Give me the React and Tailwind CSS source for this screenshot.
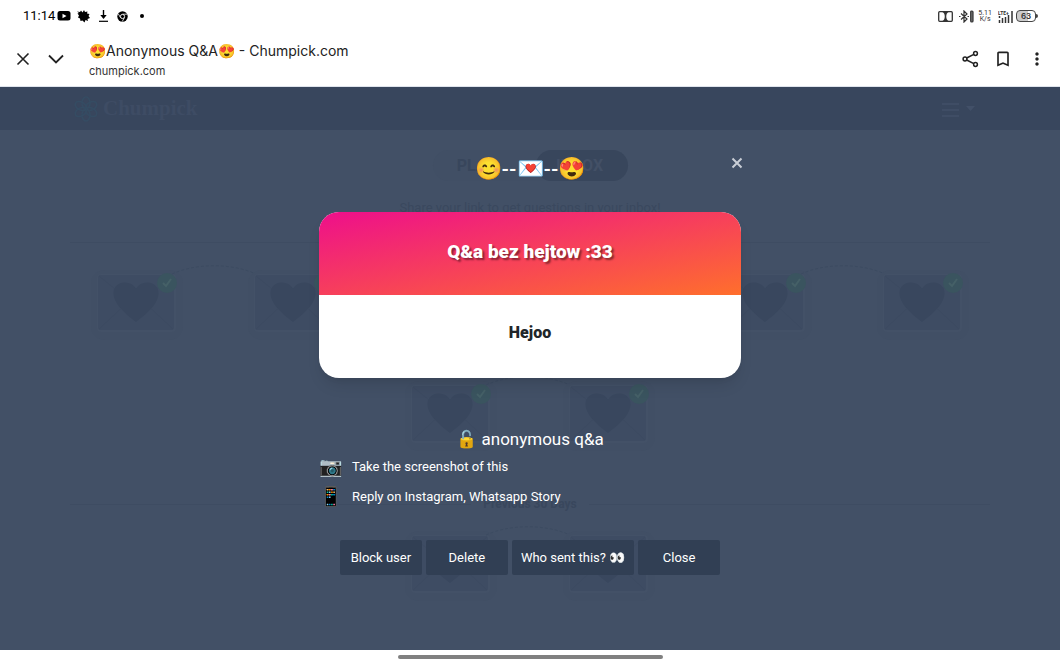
import React from 'react';
import { MdBookmarkBorder, MdMoreVert } from 'react-icons/md';

const buttons = ['Block user', 'Delete', 'Who sent this? 👀', 'Close'];

const steps = [
  { icon: '📷', text: 'Take the screenshot of this' },
  { icon: '📱', text: 'Reply on Instagram, Whatsapp Story' },
];

const StatusBar = () => (
  <div className="flex h-8 shrink-0 items-center justify-between pl-[23px] pr-[22px] text-black">
    <div className="flex items-center">
      <span className="font-[Roboto,sans-serif] text-[13px]">11:14</span>
      <svg className="ml-[2px] h-[10px] w-[14px]" viewBox="0 0 14 10">
        <rect x="0.5" width="13" height="9.5" rx="2.5" fill="#000" />
        <path d="M5.5 2.8 9.5 5l-4 2.2z" fill="#fff" />
      </svg>
      <svg className="ml-[6px] h-[13px] w-[13px]" viewBox="0 0 13 13">
        <path d="M0 1.500l3 .5L4 .5l1.500 2L7 0l1 2 2.500-.5-.5 2L12.500 4l-1 2 1.500 2-2.500 1 .5 2-2.500-1-1 2.500-2-2-2 .5-.5-2.500-2-1 1-2-1.500-2 1.500-.5z" fill="#000" />
      </svg>
      <svg className="ml-2 h-3 w-[11px]" viewBox="0 0 11 12" fill="none" stroke="#000">
        <path d="M5.500 0v6" strokeWidth="1.400" />
        <path d="M2.300 5h6.400L5.500 9z" fill="#000" stroke="none" />
        <path d="M1 11.300h9" strokeWidth="1.200" />
      </svg>
      <svg className="ml-2 h-[11px] w-[11px]" viewBox="0 0 11 11">
        <circle cx="5.500" cy="5.500" r="5.200" fill="#000" />
        <circle cx="5.500" cy="5.500" r="2.100" fill="#000" stroke="#fff" strokeWidth="0.900" />
        <path d="M5.500 3.200h4.600M3.500 6.600 1.300 2.900M7.500 6.600 5.200 10.500" stroke="#fff" strokeWidth="0.800" />
      </svg>
      <span className="ml-3 h-1 w-1 rounded-full bg-black" />
    </div>
    <div className="flex items-center text-[#333]">
      <svg className="h-[11px] w-[15px]" viewBox="0 0 15 11" fill="none" stroke="#333" strokeWidth="1.300">
        <rect x="0.700" y="0.700" width="13.600" height="9.600" rx="1" />
        <path d="M4.500 1h6c-3 1.500-3 7.500 0 9h-6c3-1.500 3-7.500 0-9z" fill="#333" stroke="none" />
      </svg>
      <svg className="ml-[6px] h-[13px] w-[15px]" viewBox="0 0 15 13" fill="none" stroke="#333" strokeWidth="1.200">
        <path d="M2 3.500l6 5.500-3 3V1l3 3-6 5.500M0 6.500h1.500M8.500 6.500H10" />
        <rect x="11.700" y="1" width="2.300" height="11" rx="1" fill="#777" />
      </svg>
      <div className="ml-1 text-center font-[Roboto,sans-serif] text-[7px] leading-[6px]">
        <div>5.11</div>
        <div>K/s</div>
      </div>
      <svg className="ml-[6px] h-[13px] w-4" viewBox="0 0 16 13" fill="none" stroke="#333" strokeWidth="1.500">
        <path d="M1.500 10v3M1.500 6v2M4.500 8v5M7.500 7v6M10.500 5v8M14 1v12" />
        <text x="0" y="4.500" fontSize="5" fontWeight="700" fontFamily="Roboto" fill="#333" stroke="none">LTE+</text>
      </svg>
      <div className="ml-[2px] flex h-3 w-5 items-center justify-center rounded-[4px] border border-[#444] bg-linear-to-r from-[#ccc] from-60% to-white to-60% font-[Inter,sans-serif] text-[8px] font-semibold">
        63
      </div>
      <span className="h-1 w-[2px] rounded-r bg-[#444]" />
    </div>
  </div>
);

const BrowserBar = () => (
  <div className="flex h-[55px] shrink-0 items-center border-b border-[#dfe4ec] px-[13px] text-[#222]">
    <button type="button" aria-label="Close tab">
      <svg className="h-5 w-5" viewBox="0 0 20 20" fill="none" stroke="currentColor" strokeWidth="1.600">
        <path d="M4.500 4.500l11 11M15.500 4.500l-11 11" />
      </svg>
    </button>
    <button type="button" aria-label="Minimize" className="ml-[15px]">
      <svg className="h-4 w-4" viewBox="0 0 16 16" fill="none" stroke="currentColor" strokeWidth="1.800">
        <path d="M1 4.500l7 7 7-7" />
      </svg>
    </button>
    <div className="ml-[25px] flex-1 pt-[3px] font-[Inter,sans-serif]">
      <div className="text-sm leading-5 text-[#222]">😍Anonymous Q&amp;A😍 - Chumpick.com</div>
      <div className="text-[11px] leading-5 text-[#333]">chumpick.com</div>
    </div>
    <div className="flex items-center gap-[14px]">
      <button type="button" aria-label="Share">
        <svg className="h-[18px] w-[18px]" viewBox="0 0 18 18" fill="none" stroke="currentColor" strokeWidth="1.500">
          <circle cx="14.500" cy="3.500" r="1.900" />
          <circle cx="4" cy="9" r="1.900" />
          <circle cx="14.500" cy="14.500" r="1.900" />
          <path d="M5.700 8 12.800 4.400M5.700 10l7.100 3.600" />
        </svg>
      </button>
      <button type="button" aria-label="Bookmark">
        <MdBookmarkBorder className="h-5 w-5" />
      </button>
      <button type="button" aria-label="More">
        <MdMoreVert className="h-5 w-5" />
      </button>
    </div>
  </div>
);

const Envelope = ({ checked, arc }) => (
  <div className="flex w-1/6 shrink-0 justify-center">
    <svg className="h-[111px] w-[158px] overflow-visible" viewBox="0 0 158 111">
      <rect x="33" y="27" width="92" height="70" rx="14" fill="#414f65" />
      <rect x="39" y="31" width="79" height="58" rx="4" fill="#435167" />
      <rect x="40" y="32" width="76" height="55" rx="3" fill="#3e4c63" />
      <path d="M41 33l37 30 37-30M41 86l28-26M115 86L87 60" fill="none" stroke="#3c4a61" />
      <path d="M78 79C65 69 55.500 60 55.500 50c0-6 5-10.500 11-10.500 5 0 9 2 11.500 6 2.500-4 6.500-6 11.500-6 6 0 11 4.500 11 10.500 0 10-9.500 19-22.500 29z" fill="#39475e" />
      {checked && (
        <g>
          <circle cx="109" cy="40" r="10" fill="#3a545f" />
          <path d="M105 40l3 3 5-7" fill="none" stroke="#456067" strokeWidth="2" />
        </g>
      )}
      {arc && <path d="M114 31c24-11 60-11 84 0" fill="none" stroke="#3c4b61" strokeDasharray="3 2" />}
    </svg>
  </div>
);

const PageBehind = () => (
  <div className="font-[Roboto,sans-serif]">
    <header className="flex h-[43px] items-center justify-between bg-[#38465d] pl-[73px] pr-[84px]">
      <a href="#home" className="flex items-center gap-1 text-[#3e4c64]">
        <svg className="h-[26px] w-[26px]" viewBox="0 0 26 26" fill="none" stroke="#354c63" strokeWidth="1.500">
          <ellipse cx="13" cy="7" rx="4" ry="6" />
          <ellipse cx="13" cy="7" rx="4" ry="6" transform="rotate(60 13 13)" />
          <ellipse cx="13" cy="7" rx="4" ry="6" transform="rotate(120 13 13)" />
          <ellipse cx="13" cy="7" rx="4" ry="6" transform="rotate(180 13 13)" />
          <ellipse cx="13" cy="7" rx="4" ry="6" transform="rotate(240 13 13)" />
          <ellipse cx="13" cy="7" rx="4" ry="6" transform="rotate(300 13 13)" />
        </svg>
        <span className="font-['Liberation_Serif',serif] text-[21px] font-bold">Chumpick</span>
      </a>
      <button type="button" aria-label="Menu">
        <svg className="h-4 w-9" viewBox="0 0 36 16" fill="none" stroke="#425068" strokeWidth="1.500">
          <path d="M2 3h17M2 9h17M2 15h17" />
          <path d="M26 5h9l-4.500 5z" fill="#425068" stroke="none" />
        </svg>
      </button>
    </header>
    <div className="mt-5 flex justify-center text-base font-bold">
      <div className="flex h-[31px] w-[195px] rounded-full bg-[#414f65]">
        <button type="button" className="flex-1 pr-4 text-[#38465c]">PLAY</button>
        <button type="button" className="w-[92px] rounded-full bg-[#38465c] pr-1 text-[#435066]">INBOX</button>
      </div>
    </div>
    <p className="mt-[17px] text-center text-[13px] leading-5 text-[#3a485e]">Share your link to get questions in your inbox!</p>
    <div className="mx-[70px] mt-6 border-t border-[#3e4c62]" />
    <div className="flex flex-wrap justify-center px-[58px]">
      {[0, 1, 2, 3, 4, 5, 6, 7].map((i) => (
        <Envelope key={i} checked arc={i !== 5 && i !== 7} />
      ))}
    </div>
    <div className="mx-[70px] mt-[27px] flex items-center gap-3 text-xs font-bold leading-6 text-[#39475d]">
      <span className="flex-1 border-t border-[#3e4c62]" />
      Previous 30 Days
      <span className="flex-1 border-t border-[#3e4c62]" />
    </div>
    <div className="-mt-3 flex justify-center px-[58px]">
      <Envelope arc />
      <Envelope />
    </div>
  </div>
);

const MessageDialog = () => (
  <div
    role="dialog"
    aria-label="Message"
    className="absolute inset-0 flex justify-center font-[Roboto,sans-serif] text-white"
  >
    <div className="relative w-full max-w-[422px]">
      <button type="button" aria-label="Close message" className="absolute -right-1 top-[68px] text-[#c9ced6]">
        <svg className="h-4 w-4" viewBox="0 0 16 16" fill="none" stroke="currentColor" strokeWidth="2">
          <path d="M3.500 3.500l9 9M12.500 3.500l-9 9" />
        </svg>
      </button>
      <div className="mt-[66px] text-center text-[22px] leading-8">
        😊<b className="text-[19px]">--</b>💌<b className="text-[19px]">--</b>😍
      </div>
      <div className="mt-[26px] overflow-hidden rounded-[20px] bg-white text-center shadow-lg">
        <h2 className="bg-linear-to-br/srgb from-[#ee0f8b] to-[#ff6f2c] pt-6 pb-7 text-[19px] font-black leading-[31px] [text-shadow:2px_2px_2px_rgba(0,0,0,0.45)]">
          Q&amp;a bez hejtow :33
        </h2>
        <p className="pt-[22px] pb-[30px] text-base font-black leading-[31px] text-[#212529]">Hejoo</p>
      </div>
      <div className="mt-[49px] text-center text-[17px] leading-6">🔓 anonymous q&amp;a</div>
      <ul className="mt-px text-[13px]">
        {steps.map((step) => (
          <li key={step.text} className="flex h-[30px] items-center gap-[10px]">
            <span className="w-[23px] text-center text-[19px]">{step.icon}</span>
            {step.text}
          </li>
        ))}
      </ul>
      <div className="mt-7 flex justify-center gap-1 text-[13px]">
        {buttons.map((label) => (
          <button
            key={label}
            type="button"
            className="h-[35px] min-w-[82px] whitespace-nowrap rounded-[2px] bg-[#313f54] px-[9px]"
          >
            {label}
          </button>
        ))}
      </div>
    </div>
  </div>
);

const App = () => (
  <div className="flex h-screen flex-col overflow-hidden bg-white">
    <StatusBar />
    <BrowserBar />
    <main className="relative min-h-0 flex-1 overflow-hidden bg-[#425066]">
      <PageBehind />
      <MessageDialog />
    </main>
    <div className="flex h-[13px] shrink-0 items-center justify-center">
      <span className="h-1 w-1/4 rounded-full bg-[#808080]" />
    </div>
  </div>
);

export default App;
